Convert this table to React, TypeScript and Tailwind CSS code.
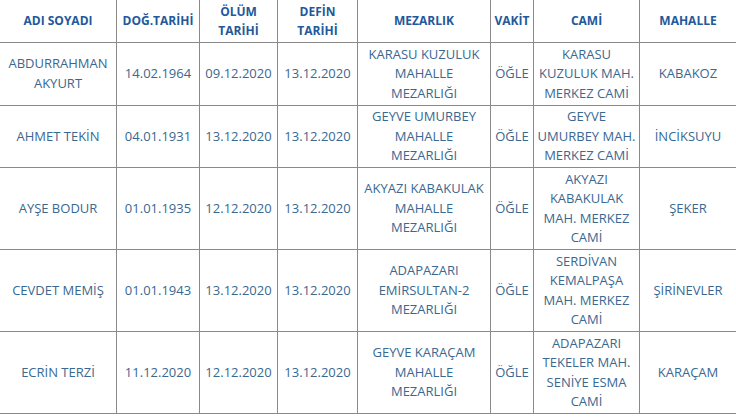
import React from 'react';

const COLS = 'grid-cols-[116px_83px_78px_80px_133px_43px_106px_97px]';

const HEADERS: string[][] = [
    ['ADI SOYADI'],
    ['DOĞ.TARİHİ'],
    ['ÖLÜM', 'TARİHİ'],
    ['DEFİN', 'TARİHİ'],
    ['MEZARLIK'],
    ['VAKİT'],
    ['CAMİ'],
    ['MAHALLE'],
];

const ROWS: string[][][] = [
    [
        ['ABDURRAHMAN', 'AKYURT'], ['14.02.1964'], ['09.12.2020'], ['13.12.2020'],
        ['KARASU KUZULUK', 'MAHALLE', 'MEZARLIĞI'], ['ÖĞLE'],
        ['KARASU', 'KUZULUK MAH.', 'MERKEZ CAMİ'], ['KABAKOZ'],
    ],
    [
        ['AHMET TEKİN'], ['04.01.1931'], ['13.12.2020'], ['13.12.2020'],
        ['GEYVE UMURBEY', 'MAHALLE', 'MEZARLIĞI'], ['ÖĞLE'],
        ['GEYVE', 'UMURBEY MAH.', 'MERKEZ CAMİ'], ['İNCİKSUYU'],
    ],
    [
        ['AYŞE BODUR'], ['01.01.1935'], ['12.12.2020'], ['13.12.2020'],
        ['AKYAZI KABAKULAK', 'MAHALLE', 'MEZARLIĞI'], ['ÖĞLE'],
        ['AKYAZI', 'KABAKULAK', 'MAH. MERKEZ', 'CAMİ'], ['ŞEKER'],
    ],
    [
        ['CEVDET MEMİŞ'], ['01.01.1943'], ['13.12.2020'], ['13.12.2020'],
        ['ADAPAZARI', 'EMİRSULTAN-2', 'MEZARLIĞI'], ['ÖĞLE'],
        ['SERDİVAN', 'KEMALPAŞA', 'MAH. MERKEZ', 'CAMİ'], ['ŞİRİNEVLER'],
    ],
    [
        ['ECRİN TERZİ'], ['11.12.2020'], ['12.12.2020'], ['13.12.2020'],
        ['GEYVE KARAÇAM', 'MAHALLE', 'MEZARLIĞI'], ['ÖĞLE'],
        ['ADAPAZARI', 'TEKELER MAH.', 'SENİYE ESMA', 'CAMİ'], ['KARAÇAM'],
    ],
];

const Cell: React.FC<{ lines: string[]; col: number; head?: boolean }> = ({ lines, col, head }) => (
    <div
        className={`flex flex-col items-center justify-center text-center px-1 py-[1.5px] border-b border-[#8a8a8a] ${
            col > 0 ? 'border-l' : ''
        } ${head ? 'font-bold text-[12px] text-[#23589b]' : 'text-[#3a6890]'}`}
    >
        {lines.map((line, i) => (
            <span key={i} className="whitespace-nowrap">{line}</span>
        ))}
    </div>
);

export default function App() {
    return (
        <div className="w-[736px] h-[417px] overflow-hidden bg-white font-['Open_Sans',sans-serif] text-[13px] leading-[19.5px]">
            <div className={`grid ${COLS}`}>
                {HEADERS.map((h, i) => (
                    <Cell key={i} lines={h} col={i} head />
                ))}
                {ROWS.map((row, r) =>
                    row.map((cell, c) => <Cell key={`${r}-${c}`} lines={cell} col={c} />)
                )}
            </div>
        </div>
    );
}
